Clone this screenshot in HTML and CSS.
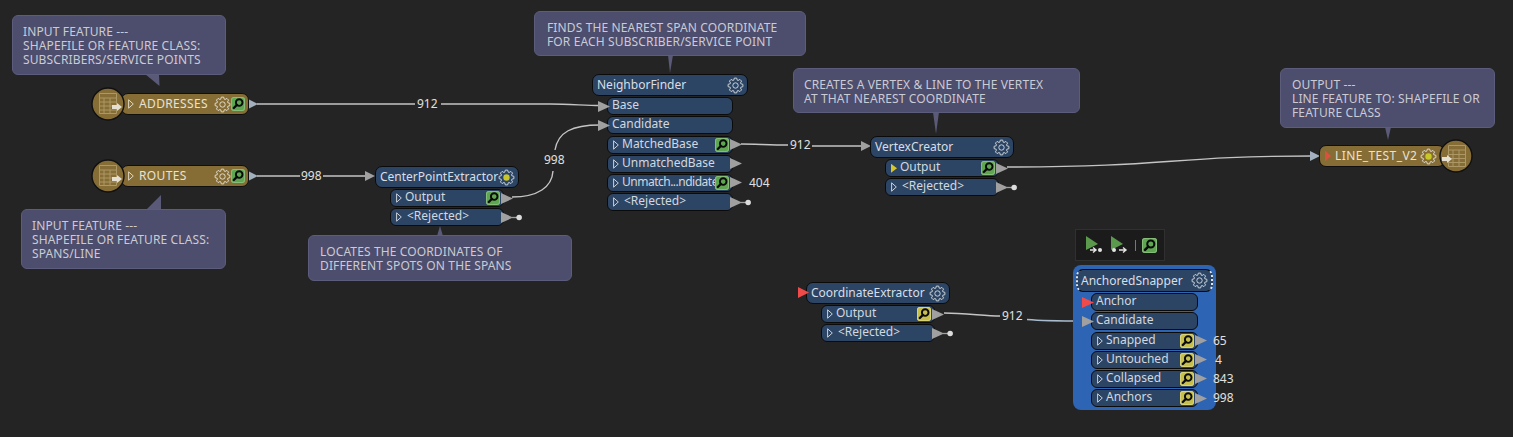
FILE: index.html
```html
<!DOCTYPE html>
<html lang="en">
<head>
<meta charset="utf-8">
<title>Workspace</title>
<link rel="stylesheet" href="styles.css">
</head>
<body>
<svg width="0" height="0" class="defs">
  <defs>
    <symbol id="gear" viewBox="-8.5 -8.5 17 17">
      <path d="M7.4-1.17 7.4 1.17 5.33 1.73 4.99 2.54 6.07 4.41 4.41 6.07 2.54 4.99 1.73 5.33 1.17 7.4-1.17 7.4-1.73 5.33-2.54 4.99-4.41 6.07-6.07 4.41-4.99 2.54-5.33 1.73-7.4 1.17-7.4-1.17-5.33-1.73-4.99-2.54-6.07-4.41-4.41-6.07-2.54-4.99-1.73-5.33-1.17-7.4 1.17-7.4 1.73-5.33 2.54-4.99 4.41-6.07 6.07-4.41 4.99-2.54 5.33-1.73Z"/>
      <circle r="2.7"/>
    </symbol>
    <symbol id="gear-on" viewBox="-8.5 -8.5 17 17">
      <path d="M7.4-1.17 7.4 1.17 5.33 1.73 4.99 2.54 6.07 4.41 4.41 6.07 2.54 4.99 1.73 5.33 1.17 7.4-1.17 7.4-1.73 5.33-2.54 4.99-4.41 6.07-6.07 4.41-4.99 2.54-5.33 1.73-7.4 1.17-7.4-1.17-5.33-1.73-4.99-2.54-6.07-4.41-4.41-6.07-2.54-4.99-1.73-5.33-1.17-7.4 1.17-7.4 1.73-5.33 2.54-4.99 4.41-6.07 6.07-4.41 4.99-2.54 5.33-1.73Z"/>
      <circle class="gear-dot" r="3.2"/>
    </symbol>
    <symbol id="caret-shape" viewBox="0 0 6 10">
      <path d="M.6.8 5.3 5 .6 9.200Z"/>
    </symbol>
    <symbol id="lens" viewBox="0 0 14 14">
      <circle class="lens-glass" cx="8.2" cy="5.6" r="3.3"/>
      <path class="lens-handle" d="M5.8 8 2.8 11"/>
    </symbol>
    <symbol id="table" viewBox="0 0 34 34">
      <circle class="table-disc" cx="17" cy="17" r="16"/>
      <path class="table-lines" d="M8.5 6.500h17v20h-17zM8.500 11h17M8.500 15h17M8.500 19h17M8.500 23h17M13 11v15.500M19 11v15.500"/>
    </symbol>
    <symbol id="table-out" viewBox="0 0 34 34">
      <circle class="table-disc" cx="17" cy="17" r="16"/>
      <path class="table-lines" d="M9.500 6.500h17v21h-17zM9.500 11h17M9.500 15.500h17M9.500 19.500h17M9.500 23.500h17M14 11v16.500M20 11v16.500"/>
    </symbol>
    <symbol id="port" viewBox="0 0 11 10" preserveAspectRatio="none">
      <path d="M0 0 11 5 0 10Z"/>
    </symbol>
    <symbol id="port-end" viewBox="0 0 20 10">
      <path d="M0 0 11 5 0 10Z"/>
      <path class="stub" d="M10 5h6"/>
      <circle class="stub-dot" cx="16.500" cy="5" r="2.500"/>
    </symbol>
  </defs>
</svg>

<main class="canvas">
  <svg class="wires" width="1513" height="437" viewBox="0 0 1513 437">
    <polygon class="tail" points="145,74 159,74 159.500,86"/>
    <polygon class="tail" points="146,210 161,210 161,195"/>
    <polygon class="tail" points="437,236 443,236 440,226"/>
    <polygon class="tail" points="668,55 673,55 670,73"/>
    <polygon class="tail" points="933,112 939,112 936,134"/>
    <polygon class="tail" points="1385,127 1391,127 1388,140"/>

    <path class="wire" d="M257 104H415"/>
    <path class="wire" d="M441 104H550C570 104 585 105.500 600 105.500"/>
    <path class="wire" d="M257 176H300"/>
    <path class="wire" d="M323 176H366"/>
    <path class="wire" d="M512 197C538 197 552 187 553 171"/>
    <path class="wire" d="M555 150C558 132 572 125 600 125"/>
    <path class="wire" d="M741 144C755 144 770 145 788 145"/>
    <path class="wire" d="M812 146H862"/>
    <path class="wire" d="M1007 167C1170 167 1170 156 1312 156"/>
    <path class="wire" d="M944 313C965 313 985 316 1000 316"/>
    <path class="wire wire-blue" d="M1027 319.500C1045 321 1065 321 1083 321"/>

    <use href="#port" x="248" y="99" width="10" height="10" class="out-blue"/>
    <use href="#port" x="248" y="171" width="10" height="10" class="out-blue"/>
    <use href="#port" x="365" y="171" width="10" height="10" class="out-grey"/>
    <use href="#port" x="861" y="141" width="10" height="10" class="out-grey"/>
    <use href="#port" x="1310" y="151" width="10" height="10" class="out-blue"/>
  </svg>

  <span class="count c-a">912</span>
  <span class="count c-b">998</span>
  <span class="count c-c">998</span>
  <span class="count c-d">912</span>
  <span class="count c-e">912</span>

  <aside class="note n-input1">INPUT FEATURE ---<br>SHAPEFILE OR FEATURE CLASS:<br>SUBSCRIBERS/SERVICE POINTS</aside>
  <aside class="note n-input2">INPUT FEATURE ---<br>SHAPEFILE OR FEATURE CLASS:<br>SPANS/LINE</aside>
  <aside class="note n-locate">LOCATES THE COORDINATES OF<br>DIFFERENT SPOTS ON THE SPANS</aside>
  <aside class="note n-finds">FINDS THE NEAREST SPAN COORDINATE<br>FOR EACH SUBSCRIBER/SERVICE POINT</aside>
  <aside class="note n-creates">CREATES A VERTEX &amp; LINE TO THE VERTEX<br>AT THAT NEAREST COORDINATE</aside>
  <aside class="note n-output">OUTPUT ---<br>LINE FEATURE TO: SHAPEFILE OR<br>FEATURE CLASS</aside>

  <section class="reader r-addresses">
    <div class="disc">
      <svg class="disc-icon"><use href="#table"/></svg>
      <span class="disc-arrow arrow-in"></span>
    </div>
    <div class="bar">
      <svg class="caret"><use href="#caret-shape"/></svg>
      <span class="bar-label">ADDRESSES</span>
      <svg class="gear"><use href="#gear"/></svg>
      <span class="inspect green"><svg><use href="#lens"/></svg></span>
    </div>
  </section>

  <section class="reader r-routes">
    <div class="disc">
      <svg class="disc-icon"><use href="#table"/></svg>
      <span class="disc-arrow arrow-in"></span>
    </div>
    <div class="bar">
      <svg class="caret"><use href="#caret-shape"/></svg>
      <span class="bar-label">ROUTES</span>
      <svg class="gear"><use href="#gear"/></svg>
      <span class="inspect green"><svg><use href="#lens"/></svg></span>
    </div>
  </section>

  <section class="reader writer r-line">
    <div class="bar">
      <span class="caret-red"></span>
      <span class="bar-label">LINE_TEST_V2</span>
      <svg class="gear"><use href="#gear-on"/></svg>
    </div>
    <div class="disc">
      <svg class="disc-icon"><use href="#table-out"/></svg>
      <span class="disc-arrow arrow-out"></span>
    </div>
  </section>

  <section class="node t-center">
    <header class="head"><span class="title">CenterPointExtractor</span><svg class="gear"><use href="#gear-on"/></svg></header>
    <div class="row"><svg class="caret"><use href="#caret-shape"/></svg><span class="label">Output</span><span class="inspect green"><svg><use href="#lens"/></svg></span><svg class="port"><use href="#port"/></svg></div>
    <div class="row"><svg class="caret"><use href="#caret-shape"/></svg><span class="label rej">&lt;Rejected&gt;</span><svg class="port-end"><use href="#port-end"/></svg></div>
  </section>

  <section class="node t-neighbor">
    <header class="head"><span class="title">NeighborFinder</span><svg class="gear"><use href="#gear"/></svg></header>
    <div class="row in"><svg class="port-in"><use href="#port"/></svg><span class="label">Base</span></div>
    <div class="row in"><svg class="port-in"><use href="#port"/></svg><span class="label">Candidate</span></div>
    <div class="row"><svg class="caret"><use href="#caret-shape"/></svg><span class="label">MatchedBase</span><span class="inspect green"><svg><use href="#lens"/></svg></span><svg class="port"><use href="#port"/></svg></div>
    <div class="row"><svg class="caret"><use href="#caret-shape"/></svg><span class="label">UnmatchedBase</span><svg class="port"><use href="#port"/></svg></div>
    <div class="row"><svg class="caret"><use href="#caret-shape"/></svg><span class="label tight">Unmatch...ndidate</span><span class="inspect green"><svg><use href="#lens"/></svg></span><svg class="port"><use href="#port"/></svg><span class="tally far">404</span></div>
    <div class="row"><svg class="caret"><use href="#caret-shape"/></svg><span class="label rej">&lt;Rejected&gt;</span><svg class="port-end"><use href="#port-end"/></svg></div>
  </section>

  <section class="node t-vertex">
    <header class="head"><span class="title">VertexCreator</span><svg class="gear"><use href="#gear"/></svg></header>
    <div class="row"><span class="caret-solid"></span><span class="label">Output</span><span class="inspect green"><svg><use href="#lens"/></svg></span><svg class="port"><use href="#port"/></svg></div>
    <div class="row"><svg class="caret"><use href="#caret-shape"/></svg><span class="label rej">&lt;Rejected&gt;</span><svg class="port-end"><use href="#port-end"/></svg></div>
  </section>

  <section class="node t-coord">
    <header class="head"><span class="flag"></span><span class="title">CoordinateExtractor</span><svg class="gear"><use href="#gear"/></svg></header>
    <div class="row"><svg class="caret"><use href="#caret-shape"/></svg><span class="label">Output</span><span class="inspect yellow"><svg><use href="#lens"/></svg></span><svg class="port"><use href="#port"/></svg></div>
    <div class="row"><svg class="caret"><use href="#caret-shape"/></svg><span class="label rej">&lt;Rejected&gt;</span><svg class="port-end"><use href="#port-end"/></svg></div>
  </section>

  <div class="toolbar">
    <svg class="tool" viewBox="0 0 20 20"><path class="tool-play" d="M2 1 14 9 2 15Z"/><path class="tool-glyph" d="M6 15h5M9 12.500l3 2.500-3 2.500"/><circle class="tool-dot" cx="16" cy="15" r="2"/></svg>
    <svg class="tool" viewBox="0 0 20 20"><path class="tool-play" d="M2 1 14 9 2 15Z"/><circle class="tool-dot" cx="5" cy="15" r="2"/><path class="tool-glyph" d="M10 15h6M14 12.500l3 2.500-3 2.500"/></svg>
    <span class="tool-sep"></span>
    <span class="inspect green big"><svg><use href="#lens"/></svg></span>
  </div>

  <section class="node t-snapper">
    <header class="head picked"><span class="title">AnchoredSnapper</span><svg class="gear"><use href="#gear"/></svg></header>
    <div class="row in"><svg class="port-in red"><use href="#port"/></svg><span class="label">Anchor</span></div>
    <div class="row in"><svg class="port-in"><use href="#port"/></svg><span class="label">Candidate</span></div>
    <div class="row"><svg class="caret"><use href="#caret-shape"/></svg><span class="label">Snapped</span><span class="inspect yellow"><svg><use href="#lens"/></svg></span><svg class="port"><use href="#port"/></svg><span class="tally">65</span></div>
    <div class="row"><svg class="caret"><use href="#caret-shape"/></svg><span class="label">Untouched</span><span class="inspect yellow"><svg><use href="#lens"/></svg></span><svg class="port"><use href="#port"/></svg><span class="tally single">4</span></div>
    <div class="row"><svg class="caret"><use href="#caret-shape"/></svg><span class="label">Collapsed</span><span class="inspect yellow"><svg><use href="#lens"/></svg></span><svg class="port"><use href="#port"/></svg><span class="tally">843</span></div>
    <div class="row"><svg class="caret"><use href="#caret-shape"/></svg><span class="label">Anchors</span><span class="inspect yellow"><svg><use href="#lens"/></svg></span><svg class="port"><use href="#port"/></svg><span class="tally">998</span></div>
  </section>
</main>
</body>
</html>
```

FILE: styles.css
```css
* { box-sizing: border-box; }
html, body { margin: 0; padding: 0; background: #242424; }
body { font-family: "Noto Sans", "Open Sans", sans-serif; font-size: 12px; color: #d6d6d6; }
.defs { position: absolute; }
.canvas { position: relative; width: 1513px; height: 437px; overflow: hidden; background: #242424; }

/* wires */
.wires { position: absolute; left: 0; top: 0; }
.wire { fill: none; stroke: #c4c4c4; stroke-width: 1.4; }
.wire-blue { stroke: #a9bccf; }
.tail { fill: #5a5a78; }
.out-grey { fill: #a0a0a0; }
.out-blue { fill: #a3b0bd; }
.stub { stroke: #a0a0a0; stroke-width: 1.2; fill: none; }
.stub-dot { fill: #dcdcdc; }

/* line totals */
.count { position: absolute; line-height: 14px; font-size: 12px; color: #e0e0e0; }
.c-a { left: 417px; top: 97px; }
.c-b { left: 301px; top: 169px; }
.c-c { left: 544px; top: 153px; }
.c-d { left: 790px; top: 138px; }
.c-e { left: 1002px; top: 309px; }

/* annotations */
.note {
  position: absolute; padding: 9px 10px; line-height: 14px; font-size: 12px; letter-spacing: .13px; color: #cbcbd3;
  background: #4d4d6e; border: 1px solid #5c5c7c; border-radius: 6px;
}
.n-input1 { left: 12px; top: 15px; width: 214px; height: 60px; }
.n-input2 { left: 21px; top: 209px; width: 205px; height: 60px; }
.n-locate { left: 308px; top: 235px; width: 264px; height: 46px; padding-left: 11px; }
.n-finds { left: 534px; top: 11px; width: 272px; height: 45px; padding-left: 12px; }
.n-creates { left: 793px; top: 68px; width: 287px; height: 45px; }
.n-output { left: 1280px; top: 68px; width: 215px; height: 60px; padding-left: 11px; }

/* feature types */
.reader { position: absolute; display: flex; align-items: center; height: 34px; }
.r-addresses { left: 91px; top: 87px; width: 158px; }
.r-routes { left: 91px; top: 159px; width: 158px; }
.r-line { left: 1319px; top: 139px; width: 154px; }
.disc { position: relative; flex: none; width: 34px; height: 34px; z-index: 1; }
.disc-icon { display: block; width: 34px; height: 34px; }
.table-disc { fill: #866c35; stroke: #101010; stroke-width: 1.4; }
.table-lines { fill: none; stroke: #ad9767; stroke-width: 1; }
.disc-arrow { position: absolute; top: 18px; width: 5px; height: 4px; background: #e4dfd1; }
.disc-arrow::after {
  content: ""; position: absolute; left: 5px; top: -2px; width: 5px; height: 8px;
  background: #e4dfd1; clip-path: polygon(0 0, 100% 50%, 0 100%);
}
.arrow-in { left: 21px; }
.arrow-out { left: 3px; }
.bar {
  flex: 1; height: 22px; margin-left: -4px; padding: 0 3px 0 6px; display: flex; align-items: center;
  background: #866c35; border: 1px solid #101010; border-radius: 7px; color: #e6e2d6;
}
.writer .bar { margin: 0 -6px 0 0; padding: 0 7px 0 5px; }
.bar-label { flex: 1; margin-left: 5px; white-space: nowrap; letter-spacing: .35px; margin-top: -1px; }
.writer .bar-label { margin-left: 4px; letter-spacing: .4px; }

/* transformers */
.node { position: absolute; display: flex; flex-direction: column; gap: 1.2px; }
.t-center { left: 375px; top: 166px; width: 144px; }
.t-neighbor { left: 592px; top: 74px; width: 156px; }
.t-vertex { left: 870px; top: 136px; width: 144px; }
.t-coord { left: 806px; top: 282px; width: 144px; }
.t-snapper {
  left: 1073px; top: 265px; width: 143px; height: 145px; padding: 4px 3px;
  background: #2d64b4; border-radius: 8px;
}
.head {
  position: relative; flex: none; height: 22px; padding: 0 3px 0 4px; display: flex; align-items: center; justify-content: space-between;
  background: #2d4565; border: 1px solid #0b0b0b; border-radius: 7px; white-space: nowrap; color: #d9dee4;
}
.title { margin-top: -1px; }
.t-snapper .head { height: 23px; padding-left: 3px; }
.picked { border-left: 2px dotted #dfe6ef; border-right: 2px dotted #dfe6ef; }
.flag {
  position: absolute; left: -9px; top: 4px; width: 11px; height: 11px;
  background: #ef4b4b; clip-path: polygon(0 0, 100% 50%, 0 100%);
}
.row {
  position: relative; flex: none; height: 18px; margin: 0 15px; padding: 0 3px 0 5px; display: flex; align-items: center;
  background: #2d4565; border: 1px solid #0b0b0b; border-radius: 6px; color: #d2d8df; white-space: nowrap;
}
.row.in { padding-left: 4px; }
.label { flex: 1; margin-left: 3px; margin-top: -2px; min-width: 0; line-height: 14px; }
.in .label { margin-left: 0; }
.label.rej { margin-left: 5px; }
.label.tight { letter-spacing: -.5px; }
.caret { flex: none; width: 6px; height: 10px; fill: none; stroke: #c9d0d8; stroke-width: 1; }
.bar .caret { stroke: #ddd6c0; }
.caret-solid {
  flex: none; width: 6px; height: 9px; background: #d6c627; clip-path: polygon(0 0, 100% 50%, 0 100%);
}
.caret-red {
  flex: none; width: 6px; height: 11px; background: #d8533f; clip-path: polygon(0 0, 100% 50%, 0 100%);
}
.port, .port-in { position: absolute; width: 12px; height: 11px; top: 2.5px; fill: #a0a0a0; }
.port { right: -10px; }
.port-end { position: absolute; width: 22px; height: 11px; top: 2.5px; right: -20px; fill: #a0a0a0; }
.port-in { left: -10px; }
.port-in.red { fill: #ef4b4b; }
.tally { position: absolute; left: calc(100% + 16px); top: 1px; line-height: 14px; color: #e0e0e0; }
.tally.far { left: calc(100% + 17px); }
.tally.single { left: calc(100% + 18px); }

.gear { flex: none; width: 17px; height: 17px; fill: none; stroke: #c9d0d6; stroke-width: 1; stroke-linejoin: round; }
.bar .gear { stroke: #e0dac8; }
.gear-dot { fill: #c8c629; stroke: none; }

.inspect {
  flex: none; width: 14px; height: 14px; border-radius: 3px; display: flex;
}
.inspect svg { width: 100%; height: 100%; }
.green { background: #5fa650; box-shadow: inset 0 0 0 1px #86bd78; }
.yellow { background: #c6bf4c; box-shadow: inset 0 0 0 1px #d8d27a; }
.lens-glass { fill: none; stroke: #0a0a0a; stroke-width: 1.9; }
.lens-handle { fill: none; stroke: #0a0a0a; stroke-width: 2.4; stroke-linecap: round; }

/* floating toolbar */
.toolbar {
  position: absolute; left: 1075px; top: 229px; width: 90px; height: 32px; padding: 0 8px; display: flex; align-items: center; gap: 5px;
  background: #1b1b1b; border: 1px solid #303030;
}
.tool { flex: none; width: 20px; height: 20px; }
.tool-play { fill: #5b9a4c; }
.tool-glyph { fill: none; stroke: #e4e4e4; stroke-width: 1.4; }
.tool-dot { fill: #e4e4e4; }
.tool-sep { flex: none; width: 1px; height: 11px; background: #777; margin: 0 1px; }
.inspect.big { width: 15px; height: 15px; }
```
